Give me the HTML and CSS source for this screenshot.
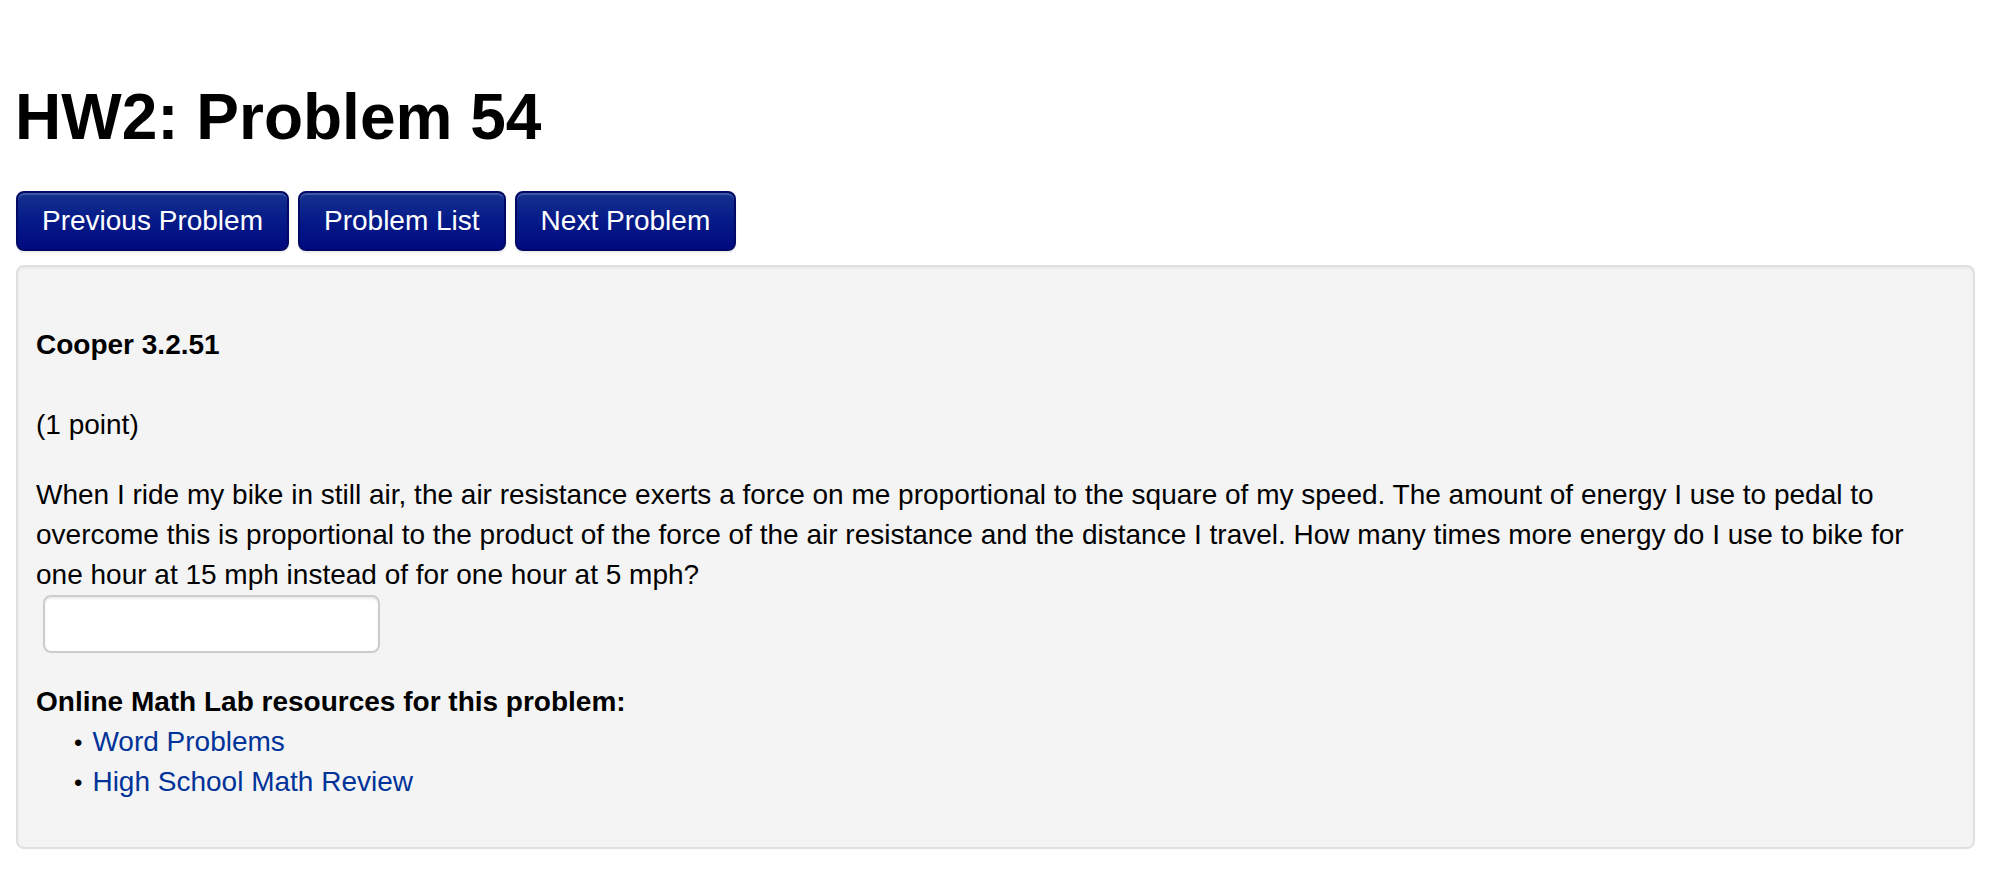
FILE: index.html
```html
<!DOCTYPE html>
<html lang="en">
<head>
<meta charset="utf-8">
<title>HW2: Problem 54</title>
<link rel="stylesheet" href="styles.css">
</head>
<body>
<h1 class="page-title">HW2: Problem 54</h1>
<div class="nav">
  <a class="btn" href="#">Previous Problem</a>
  <a class="btn" href="#">Problem List</a>
  <a class="btn" href="#">Next Problem</a>
</div>
<div class="well">
  <div class="problem-id">Cooper 3.2.51</div>
  <div class="points">(1 point)</div>
  <p class="question">When I ride my bike in still air, the air resistance exerts a force on me proportional to the square of my speed. The amount of energy I use to pedal to overcome this is proportional to the product of the force of the air resistance and the distance I travel. How many times more energy do I use to bike for one hour at 15 mph instead of for one hour at 5 mph?</p>
  <div class="answer-row"><input class="answer" type="text" aria-label="answer"></div>
  <div class="resources-title">Online Math Lab resources for this problem:</div>
  <ul class="resources">
    <li><a href="#">Word Problems</a></li>
    <li><a href="#">High School Math Review</a></li>
  </ul>
</div>
</body>
</html>
```

FILE: styles.css
```css
html, body {
  margin: 0;
  background: #ffffff;
}
body {
  padding: 0 29px 0 16px;
  font-family: "Liberation Sans", Arial, Helvetica, sans-serif;
  font-size: 28px;
  line-height: 40px;
  color: #000000;
}
.page-title {
  margin: 85px 0 0 -1px;
  font-size: 64px;
  line-height: 64px;
  font-weight: bold;
}
.nav {
  display: flex;
  gap: 9px;
  margin-top: 42px;
}
.btn {
  display: block;
  padding: 8px 24px;
  border: 2px solid #000a66;
  border-radius: 8px;
  background: linear-gradient(to bottom, #15318f 0%, #051a88 50%, #000a80 100%);
  box-shadow: inset 0 2px 0 rgba(255, 255, 255, 0.18), 0 2px 2px rgba(0, 0, 0, 0.08);
  color: #ffffff;
  text-decoration: none;
  font-size: 28px;
  line-height: 40px;
}
.well {
  margin-top: 14px;
  padding: 58px 18px 45px 18px;
  background: #f4f4f4;
  border: 2px solid #e0e0e0;
  border-radius: 8px;
  box-shadow: inset 0 2px 2px rgba(0, 0, 0, 0.04);
}
.problem-id {
  font-weight: bold;
}
.points {
  margin-top: 40px;
}
.question {
  margin: 30px 0 0 0;
}
.answer-row {
  padding-left: 7px;
}
.answer {
  display: block;
  box-sizing: border-box;
  width: 337px;
  height: 58px;
  margin: 0;
  border: 2px solid #cccccc;
  border-radius: 8px;
  background: #ffffff;
  box-shadow: inset 0 2px 2px rgba(0, 0, 0, 0.075);
  font-family: inherit;
  font-size: 28px;
}
.resources-title {
  margin-top: 29px;
  font-weight: bold;
}
.resources {
  list-style: none;
  margin: 0;
  padding: 0 0 0 38px;
}
.resources li::before {
  content: "\2022";
  display: inline-block;
  margin-right: 10px;
  font-size: 24px;
  line-height: 1;
}
.resources a {
  color: #003399;
  text-decoration: none;
}
```
